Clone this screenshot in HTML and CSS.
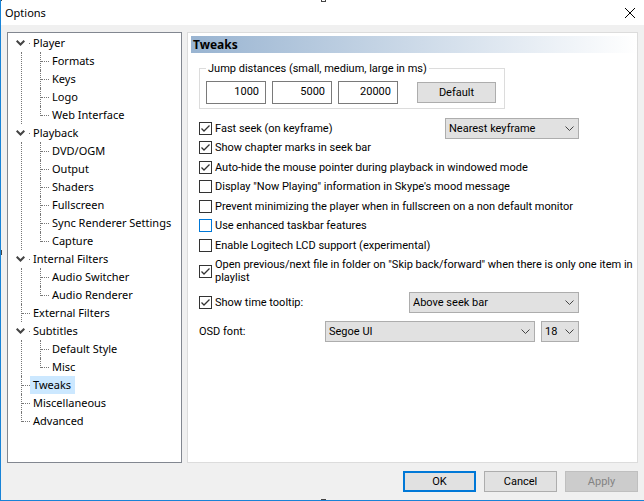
FILE: index.html
```
<!DOCTYPE html>
<html lang="en">

<head>
    <meta charset="UTF-8">
    <meta name="viewport" content="width=device-width, initial-scale=1.0">
    <title>Options</title>
    <link rel="stylesheet" href="styles.css">
</head>

<body>
    <div class="dialog">
        <!-- Resize handles -->
        <span class="handle handle-corner"></span>
        <span class="handle handle-top"></span>
        <span class="handle handle-left"></span>
        <span class="handle handle-bottom"></span>

        <!-- Title bar -->
        <header class="title-bar">
            <h1>Options</h1>
            <button class="close-btn" type="button" aria-label="Close">
                <svg width="10" height="10" viewBox="0 0 10 10"><path d="M0 0L10 10M10 0L0 10"/></svg>
            </button>
        </header>

        <div class="dialog-body">
            <!-- Page tree -->
            <nav class="tree" aria-label="Options pages">
                <details open>
                    <summary><svg class="chevron" width="9" height="6" viewBox="0 0 9 6"><path d="M0.7 0.7L4.5 4.5L8.3 0.7"/></svg><span>Player</span></summary>
                    <ul class="children">
                        <li><a href="#">Formats</a></li>
                        <li><a href="#">Keys</a></li>
                        <li><a href="#">Logo</a></li>
                        <li><a href="#">Web Interface</a></li>
                    </ul>
                </details>
                <details open>
                    <summary><svg class="chevron" width="9" height="6" viewBox="0 0 9 6"><path d="M0.7 0.7L4.5 4.5L8.3 0.7"/></svg><span>Playback</span></summary>
                    <ul class="children">
                        <li><a href="#">DVD/OGM</a></li>
                        <li><a href="#">Output</a></li>
                        <li><a href="#">Shaders</a></li>
                        <li><a href="#">Fullscreen</a></li>
                        <li><a href="#">Sync Renderer Settings</a></li>
                        <li><a href="#">Capture</a></li>
                    </ul>
                </details>
                <details open>
                    <summary><svg class="chevron" width="9" height="6" viewBox="0 0 9 6"><path d="M0.7 0.7L4.5 4.5L8.3 0.7"/></svg><span>Internal Filters</span></summary>
                    <ul class="children">
                        <li><a href="#">Audio Switcher</a></li>
                        <li><a href="#">Audio Renderer</a></li>
                    </ul>
                </details>
                <ul class="pages">
                    <li class="joined"><a href="#">External Filters</a></li>
                </ul>
                <details open>
                    <summary><svg class="chevron" width="9" height="6" viewBox="0 0 9 6"><path d="M0.7 0.7L4.5 4.5L8.3 0.7"/></svg><span>Subtitles</span></summary>
                    <ul class="children">
                        <li><a href="#">Default Style</a></li>
                        <li><a href="#">Misc</a></li>
                    </ul>
                </details>
                <ul class="pages">
                    <li><a class="selected" href="#" aria-current="page">Tweaks</a></li>
                    <li><a href="#">Miscellaneous</a></li>
                    <li><a href="#">Advanced</a></li>
                </ul>
            </nav>

            <!-- Tweaks page -->
            <main class="panel">
                <h2>Tweaks</h2>
                <form class="tweaks" id="tweaks">
                    <fieldset class="jump">
                        <legend>Jump distances (small, medium, large in ms)</legend>
                        <input type="text" value="1000" aria-label="Small jump">
                        <input type="text" value="5000" aria-label="Medium jump">
                        <input type="text" value="20000" aria-label="Large jump">
                        <button class="btn default-btn" type="button">Default</button>
                    </fieldset>

                    <div class="checks">
                        <div class="row">
                            <label class="check"><input type="checkbox" checked>Fast seek (on keyframe)</label>
                            <select class="seek-mode" aria-label="Fast seek mode">
                                <option>Nearest keyframe</option>
                            </select>
                        </div>
                        <label class="check"><input type="checkbox" checked>Show chapter marks in seek bar</label>
                        <label class="check"><input type="checkbox" checked>Auto-hide the mouse pointer during playback in windowed mode</label>
                        <label class="check"><input type="checkbox">Display "Now Playing" information in Skype's mood message</label>
                        <label class="check"><input type="checkbox">Prevent minimizing the player when in fullscreen on a non default monitor</label>
                        <label class="check"><input class="hot" type="checkbox">Use enhanced taskbar features</label>
                        <label class="check"><input type="checkbox">Enable Logitech LCD support (experimental)</label>
                    </div>
                    <label class="check two-line"><input type="checkbox" checked><span>Open previous/next file in folder on "Skip back/forward" when there is only one item in playlist</span></label>

                    <div class="row tooltip-row">
                        <label class="check"><input type="checkbox" checked>Show time tooltip:</label>
                        <select class="tooltip-pos" aria-label="Time tooltip position">
                            <option>Above seek bar</option>
                        </select>
                    </div>
                    <div class="row font-row">
                        <label for="osd-font">OSD font:</label>
                        <select class="osd-font" id="osd-font">
                            <option>Segoe UI</option>
                        </select>
                        <select class="osd-size" aria-label="OSD font size">
                            <option>18</option>
                        </select>
                    </div>
                </form>
            </main>
        </div>

        <footer class="actions">
            <button class="btn primary" type="submit" form="tweaks">OK</button>
            <button class="btn" type="button">Cancel</button>
            <button class="btn" type="button" disabled>Apply</button>
        </footer>
    </div>
</body>

</html>
```

FILE: styles.css
```
* {
    box-sizing: border-box;
}

body {
    margin: 0;
    font-family: Roboto, sans-serif;
    font-size: 11px;
    color: #000;
}

.dialog {
    position: relative;
    display: flex;
    flex-direction: column;
    min-height: 100vh;
    overflow: hidden;
    background-color: #f0f0f0;
    border-left: 1px solid #1883d7;
    border-bottom: 1px solid #1883d7;
}

/* Resize handles, half outside the dialog edge */
.handle {
    position: absolute;
    width: 5px;
    height: 5px;
    background-color: #fff;
    border: 1px solid #444;
}

.handle-corner {
    top: -4px;
    left: -4px;
}

.handle-top {
    top: -3px;
    left: calc(50% - 2px);
}

.handle-left {
    top: 50%;
    left: -4px;
}

.handle-bottom {
    bottom: -4px;
    left: calc(50% - 2px);
}

/* Title bar */
.title-bar {
    display: flex;
    justify-content: space-between;
    align-items: center;
    height: 25px;
    padding: 0 9px 0 4px;
    background-color: #fff;
}

.title-bar h1 {
    margin: 0;
    font: 11px "Noto Sans", sans-serif;
}

.close-btn {
    display: flex;
    padding: 0;
    border: none;
    background: none;
}

.close-btn path {
    stroke: #000;
    fill: none;
}

.dialog-body {
    display: flex;
    flex: 1;
    gap: 5px;
    padding: 7px 6px 0;
}

/* Page tree */
.tree {
    flex: 0 0 175px;
    padding: 1px 0 0 8px;
    background-color: #fff;
    border: 1px solid #828790;
    font: 11px/18px "Noto Sans", sans-serif;
    white-space: nowrap;
}

.tree ul {
    margin: 0;
    padding: 0;
    list-style: none;
}

.tree summary {
    display: flex;
    align-items: center;
    height: 18px;
    list-style: none;
}

.chevron {
    margin-right: 4px;
}

.chevron path {
    stroke: #444;
    stroke-width: 2;
    fill: none;
}

.tree summary::after {
    content: "";
    order: 1;
    width: 1px;
    height: 1px;
    margin-right: 3px;
    background-color: #777;
}

.tree summary span {
    order: 2;
}

.tree .children {
    margin-left: 5px;
    padding-left: 18px;
    border-left: 1px dotted #777;
}

.tree .pages {
    margin-left: 5px;
}

.tree li {
    display: flex;
    height: 18px;
}

/* Dotted connector: vertical part, then the stub to the label */
.tree li::before {
    content: "";
    border-left: 1px dotted #777;
}

.tree li::after {
    content: "";
    width: 8px;
    margin-top: 9px;
    border-top: 1px dotted #777;
}

.tree li:last-child:not(.joined)::before {
    height: 10px;
}

.tree a {
    order: 1;
    padding: 0 4px 0 3px;
    color: #000;
    text-decoration: none;
}

.tree a.selected {
    background-color: #cce8ff;
}

/* Tweaks page */
.panel {
    flex: 1;
    min-width: 0;
    padding: 3px 0 0 3px;
    background-color: #fff;
    border: 1px solid #dcdcdc;
}

.panel h2 {
    margin: 0;
    padding-left: 2px;
    background: linear-gradient(to right, #99b4d1, #fff);
    font: bold 12px/17px "Noto Sans", sans-serif;
}

.tweaks {
    margin: 9px 2px 0 8px;
}

.jump {
    display: flex;
    align-items: center;
    gap: 6px;
    width: 306px;
    margin: 0;
    padding: 6px 8px 4px 6px;
    border: 1px solid #dcdcdc;
}

.jump legend {
    padding: 0 2px;
    line-height: 13px;
}

.jump input {
    width: 60px;
    height: 23px;
    padding: 0 6px 2px;
    border: 1px solid #7a7a7a;
    font: inherit;
    text-align: right;
}

.btn {
    width: 73px;
    height: 21px;
    padding: 0;
    background-color: #e1e1e1;
    border: 1px solid #adadad;
    font: inherit;
    color: #000;
}

.default-btn {
    width: 79px;
    margin-left: auto;
}

.checks {
    display: grid;
    grid-auto-rows: 20px 19px;
    margin-top: 9px;
}

.row {
    display: flex;
    align-items: center;
    justify-content: space-between;
    padding-right: 56px;
}

.check {
    display: flex;
    align-items: center;
    gap: 3px;
}

.check input {
    flex: none;
    appearance: none;
    width: 13px;
    height: 13px;
    margin: 0;
    background-color: #fff;
    border: 1px solid #333;
}

.check input:checked {
    background-image: url("data:image/svg+xml,%3Csvg xmlns='http://www.w3.org/2000/svg' viewBox='0 0 11 11'%3E%3Cpath d='M1.5 5.5L4 8L9.5 2.5' fill='none' stroke='%23333' stroke-width='1.3'/%3E%3C/svg%3E");
}

.check input.hot {
    border: 1px solid #0078d7;
}

.two-line {
    margin-top: 3px;
    line-height: 13px;
}

select {
    appearance: none;
    height: 21px;
    padding: 0 20px 0 3px;
    background: #e1e1e1 url("data:image/svg+xml,%3Csvg xmlns='http://www.w3.org/2000/svg' width='9' height='5' viewBox='0 0 9 5'%3E%3Cpath d='M0.5 0.5L4.5 4.5L8.5 0.5' fill='none' stroke='%23444'/%3E%3C/svg%3E") no-repeat right 4px center;
    border: 1px solid #adadad;
    border-radius: 0;
    font: inherit;
    color: #000;
}

.seek-mode {
    width: 134px;
}

.tooltip-row {
    margin-top: 8px;
}

.tooltip-pos {
    width: 170px;
}

.font-row {
    gap: 6px;
    margin-top: 8px;
}

.osd-font {
    width: 210px;
    margin-left: auto;
}

.osd-size {
    width: 38px;
}

/* Dialog buttons */
.actions {
    display: flex;
    justify-content: flex-end;
    gap: 8px;
    padding: 8px 6px;
}

.primary {
    border: 2px solid #0078d7;
}

.btn:disabled {
    background-color: #ccc;
    border-color: #bfbfbf;
    color: #838383;
}
```
